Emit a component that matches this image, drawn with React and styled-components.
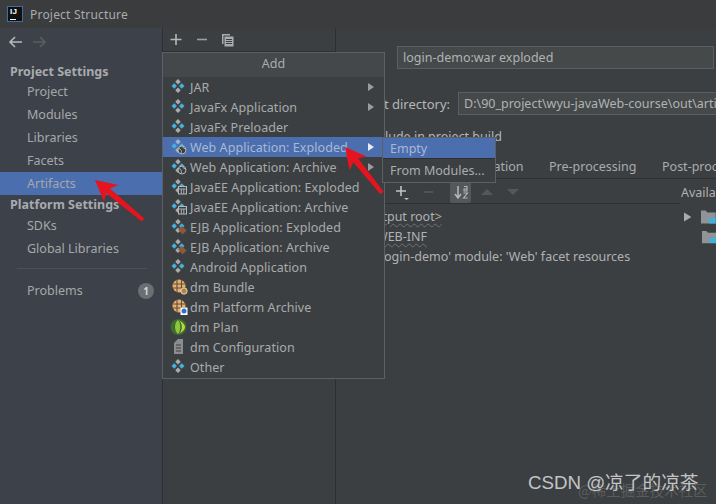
import React from "react";
import styled, { createGlobalStyle } from "styled-components";

const Global = createGlobalStyle`
  html, body { margin: 0; padding: 0; background: #3c3f41; }
  * { box-sizing: border-box; }
  #root { width: 716px; height: 504px; overflow: hidden; }
`;

const Win = styled.div`
  position: relative;
  width: 716px;
  height: 504px;
  overflow: hidden;
  display: flex;
  flex-direction: column;
  background: #3c3f41;
  color: #b4b7b9;
  font-family: "Noto Sans", "Open Sans", sans-serif;
  font-size: 13px;
`;
const TitleBar = styled.div`
  height: 28px;
  flex: none;
  display: flex;
  align-items: center;
  gap: 7px;
  padding-left: 7px;
  background: #3a3c3e;
  font-size: 12px;
  color: #a9abad;
  letter-spacing: 0.2px;
`;
const Logo = styled.div`
  width: 16px;
  height: 16px;
  background: #111;
  border: 1px solid #3f6ea5;
  color: #fff;
  font: bold 8px/8px "Liberation Sans", sans-serif;
  padding: 1px 0 0 2px;
  position: relative;
  &::after {
    content: "";
    position: absolute;
    left: 2px;
    bottom: 1px;
    width: 6px;
    height: 1px;
    background: #fff;
  }
`;
const Body = styled.div`
  flex: 1;
  display: flex;
  min-height: 0;
`;
const Sidebar = styled.div`
  width: 163px;
  flex: none;
  background: #3d4149;
  border-right: 1px solid #2e2f31;
  display: flex;
  flex-direction: column;
`;
const NavBar = styled.div`
  height: 28px;
  display: flex;
  align-items: center;
  gap: 11px;
  padding: 0 0 0 8px;
`;
const SideHead = styled.div`
  height: ${(p) => p.$h}px;
  display: flex;
  align-items: center;
  padding-left: 10px;
  font-weight: 700;
  font-size: 12.5px;
  color: #a8abae;
`;
const SideItem = styled.div`
  height: 23px;
  display: flex;
  align-items: center;
  padding-left: 27px;
  font-size: 12.5px;
  color: #a5a8ab;
  background: ${(p) => (p.$active ? "#4b6eaf" : "transparent")};
  justify-content: space-between;
  padding-right: 8px;
`;
const SideRule = styled.div`
  height: 1px;
  margin: 8px 15px 10px 17px;
  background: #4c4f55;
`;
const Badge = styled.span`
  width: 16px;
  height: 16px;
  border-radius: 50%;
  background: #6b6e73;
  color: #d5d6d7;
  font-size: 10px;
  font-weight: 700;
  display: flex;
  align-items: center;
  justify-content: center;
`;
const Middle = styled.div`
  width: 173px;
  flex: none;
  border-right: 1px solid #2e2f31;
`;
const MidBar = styled.div`
  height: 24px;
  display: flex;
  align-items: center;
  gap: 13px;
  padding-left: 6px;
  border-bottom: 1px solid #2e2f31;
`;
const Right = styled.div`
  flex: 1;
  min-width: 0;
  overflow: hidden;
  padding-top: 18px;
`;
const FieldRow = styled.div`
  display: flex;
  align-items: center;
  height: 23px;
  margin-bottom: ${(p) => p.$mb || 0}px;
  padding-left: ${(p) => p.$pl || 0}px;
  white-space: nowrap;
`;
const Label = styled.span`
  width: ${(p) => p.$w}px;
  flex: none;
  font-size: 13px;
  color: #b4b7b9;
`;
const Field = styled.div`
  height: 23px;
  flex: none;
  width: ${(p) => p.$w}px;
  border: 1px solid #5b5e60;
  background: #45494a;
  padding-left: 5px;
  line-height: 21px;
  font-size: 12.5px;
  color: #b0b3b5;
  overflow: hidden;
  white-space: nowrap;
`;
const Include = styled.div`
  height: 19px;
  margin-top: 12px;
  padding-left: 31px;
  font-size: 12.5px;
  line-height: 19px;
  white-space: nowrap;
`;
const Tabs = styled.div`
  display: flex;
  height: 33px;
  align-items: flex-end;
  padding: 0 0 3px 129px;
  border-bottom: 1px solid #2f3032;
  font-size: 12.5px;
  color: #a9acae;
  white-space: nowrap;
`;
const Tab = styled.span`
  width: ${(p) => p.$w}px;
  flex: none;
`;
const Tools = styled.div`
  height: 24px;
  display: flex;
  align-items: center;
  padding: 2px 0 0 59px;
`;
const SortBtn = styled.span`
  width: 21px;
  height: 21px;
  background: #55585a;
  border-radius: 2px;
  display: flex;
  align-items: center;
  justify-content: center;
  margin-left: 13px;
  flex: none;
`;
const Availa = styled.span`
  margin-left: auto;
  width: 35px;
  flex: none;
  overflow: hidden;
  font-size: 12.5px;
  white-space: nowrap;
  color: #aeb1b3;
`;
const Tree = styled.div`
  display: flex;
  border-top: 1px solid #2f3032;
  margin-right: 36px;
  padding-top: 3px;
`;
const TreeList = styled.div`
  flex: 1;
  min-width: 0;
  padding-left: ${(p) => p.$pl}px;
`;
const TreeRow = styled.div`
  height: 20px;
  line-height: 20px;
  font-size: 12.5px;
  color: #afb2b4;
  white-space: nowrap;
  margin-left: ${(p) => p.$ml || 0}px;
  text-decoration: ${(p) => (p.$wavy ? "underline wavy #707070 1px" : "none")};
  text-underline-offset: 2px;
`;
const Avail = styled.div`
  position: absolute;
  left: 684px;
  top: 209px;
  width: 32px;
  display: flex;
  flex-direction: column;
  gap: 4px;
`;
const AvailRow = styled.div`
  display: flex;
  align-items: center;
  height: 16px;
  padding-left: ${(p) => p.$pl || 0}px;
  gap: 10px;
`;
const Menu = styled.div`
  position: absolute;
  left: 162px;
  top: 52px;
  width: 223px;
  height: 327px;
  background: #3c3f41;
  border: 1px solid #5e6163;
  display: flex;
  flex-direction: column;
  z-index: 2;
`;
const MenuTitle = styled.div`
  height: 24px;
  flex: none;
  background: #45484a;
  text-align: center;
  line-height: 21px;
  font-size: 12.5px;
  color: #a9acae;
`;
const MenuItem = styled.div`
  height: 20px;
  flex: none;
  display: flex;
  align-items: center;
  padding: 0 10px 0 7px;
  gap: 2px;
  font-size: 12.5px;
  letter-spacing: 0.06px;
  color: ${(p) => (p.$active ? "#a9b9d3" : "#a8abad")};
  background: ${(p) => (p.$active ? "#4b6eaf" : "transparent")};
  white-space: nowrap;
`;
const ItemText = styled.span`
  flex: 1;
`;
const Caret = styled.span`
  width: 0;
  height: 0;
  border-left: 6px solid ${(p) => (p.$active ? "#e8ecf2" : "#9a9da0")};
  border-top: 4px solid transparent;
  border-bottom: 4px solid transparent;
`;
const Gap = styled.div`
  height: ${(p) => p.$h}px;
  flex: none;
`;
const Sub = styled.div`
  position: absolute;
  left: 382px;
  top: 137px;
  width: 114px;
  height: 46px;
  background: #3c3f41;
  border: 1px solid #5e6163;
  z-index: 3;
  display: flex;
  flex-direction: column;
`;
const SubItem = styled.div`
  height: ${(p) => p.$h}px;
  padding-left: 7px;
  display: flex;
  align-items: center;
  font-size: 12.5px;
  color: ${(p) => (p.$active ? "#a9b9d3" : "#aaadaf")};
  background: ${(p) => (p.$active ? "#4b6eaf" : "transparent")};
  border-bottom: ${(p) => (p.$active ? "1px solid #2f3032" : "none")};
`;
const ArrowSvg = styled.svg`
  position: absolute;
  left: ${(p) => p.$x}px;
  top: ${(p) => p.$y}px;
  z-index: 5;
`;
const Watermark = styled.div`
  position: absolute;
  left: 528px;
  top: 472px;
  font-family: "Liberation Sans", "Noto Sans CJK SC", sans-serif;
  font-size: 18.7px;
  line-height: 22px;
  color: #c2c4c6;
  white-space: nowrap;
  z-index: 6;
`;
const WatermarkBack = styled.div`
  position: absolute;
  left: 578px;
  top: 481px;
  font-family: "Noto Sans CJK SC", sans-serif;
  font-size: 14.5px;
  line-height: 18px;
  color: #5a5c5e;
  white-space: nowrap;
  z-index: 5;
`;

const Diamonds = ({ active }) => (
  <g transform="translate(1.6 1.6) scale(0.8)">
    <rect x="5.6" y="0.4" width="4.8" height="4.8" transform="rotate(45 8 2.8)" fill={active ? "#9fb3cf" : "#a9adb0"} />
    <rect x="0.9" y="5.6" width="4.8" height="4.8" transform="rotate(45 3.3 8)" fill="#45b0dc" />
    <rect x="10.3" y="5.6" width="4.8" height="4.8" transform="rotate(45 12.7 8)" fill="#45b0dc" />
    <rect x="5.6" y="10.8" width="4.8" height="4.8" transform="rotate(45 8 13.2)" fill={active ? "#9fb3cf" : "#a9adb0"} />
  </g>
);
const Icon = ({ kind, active }) => {
  if (kind === "bundle" || kind === "platform")
    return (
      <svg width="18" height="18" viewBox="-1 0 18 18">
        <circle cx="8" cy="8" r="6.500" fill="#e8b06a" />
        <path d="M1.500 6h13M1.500 10h13M6 1.500v13M10.500 1.500v13" stroke="#5f5040" strokeWidth="1.100" />
        {kind === "bundle" ? (
          <circle cx="13" cy="13" r="3.200" fill="#b8813d" stroke="#eee" strokeWidth="0.800" />
        ) : (
          <g>
            <rect x="9.500" y="9.500" width="7" height="7.500" fill="#fff" />
            <circle cx="13" cy="13" r="2.500" fill="#2f6fd0" />
          </g>
        )}
      </svg>
    );
  if (kind === "plan")
    return (
      <svg width="18" height="18" viewBox="0 0 18 18">
        <circle cx="8.500" cy="9" r="8" fill="#3e6b2e" />
        <path d="M8.500 2C13 5 13 13 8.500 16C12 14 15 12 15 9C15 6 12 4 8.500 2Z" fill="#b7d640" />
        <path d="M8 2C4 5 4 13 8 16C11 13 11 5 8 2Z" fill="#8cc63e" />
      </svg>
    );
  if (kind === "config")
    return (
      <svg width="18" height="18" viewBox="0 0 18 18">
        <path d="M4 5L8 1H13V16H4Z" fill="#8a8d8f" />
        <path d="M6 7H11M6 10H11M6 13H11" stroke="#3c3f41" strokeWidth="1" />
      </svg>
    );
  return (
    <svg width="18" height="18" viewBox="0 0 18 18">
      <Diamonds active={active} />
      {kind === "web" && (
        <g>
          <circle cx="12" cy="12" r="4" fill="#3c3f41" stroke="#b5b8ba" strokeWidth="1" />
          <path d="M9 10.500C11 11 12 13 11 15.500M12 8.500C13 10 15 11 16 11" stroke="#b5b8ba" strokeWidth="0.900" fill="none" />
        </g>
      )}
      {kind === "ee" && (
        <g>
          <rect x="8.500" y="8.500" width="8" height="7.500" fill="#3c3f41" stroke="#b5b8ba" strokeWidth="1" />
          <path d="M8.500 11H16.500M11.300 11V16M13.800 11V16" stroke="#b5b8ba" strokeWidth="0.900" />
        </g>
      )}
      {kind === "ejb" && <path d="M8 11L12 8L16.500 12.500L12.500 16.500Z" fill="#8a5a3c" />}
    </svg>
  );
};

const items = [
  ["JAR", "d", 1],
  ["JavaFx Application", "d", 1],
  ["JavaFx Preloader", "d", 0],
  ["Web Application: Exploded", "web", 1, true],
  ["Web Application: Archive", "web", 1],
  ["JavaEE Application: Exploded", "ee", 0],
  ["JavaEE Application: Archive", "ee", 0],
  ["EJB Application: Exploded", "ejb", 0],
  ["EJB Application: Archive", "ejb", 0],
  ["Android Application", "d", 0],
  ["dm Bundle", "bundle", 0],
  ["dm Platform Archive", "platform", 0],
  ["dm Plan", "plan", 0],
  ["dm Configuration", "config", 0],
  ["Other", "d", 0],
];

const Arrow = ({ x, y, w, h, tip, tail }) => {
  const dx = tail[0] - tip[0];
  const dy = tail[1] - tip[1];
  const len = Math.hypot(dx, dy);
  const ux = dx / len;
  const uy = dy / len;
  const nx = -uy;
  const ny = ux;
  const p = (d, o) => `${tip[0] + ux * d + nx * o},${tip[1] + uy * d + ny * o}`;
  return (
    <ArrowSvg $x={x} $y={y} width={w} height={h} viewBox={`${x} ${y} ${w} ${h}`}>
      <polygon
        points={[p(0, 0), p(21, 11), p(17, 3), p(len, 2), p(len, -2), p(17, -3), p(21, -11)].join(" ")}
        fill="#e5141f"
      />
    </ArrowSvg>
  );
};

const Stroke = ({ w = 12, h = 12, c = "#b5b8ba", children }) => (
  <svg width={w} height={h} viewBox={`0 0 ${w} ${h}`} fill="none" stroke={c} strokeWidth="1.600">
    {children}
  </svg>
);

const Folder = () => (
  <svg width="16" height="14" viewBox="0 0 16 14">
    <path d="M0 0H5L7 2H16V14H0Z" fill="#8e9498" />
    <rect x="9" y="8" width="7" height="6" fill="#3fb1e0" />
  </svg>
);

export default function App() {
  return (
    <Win>
      <Global />
      <TitleBar>
        <Logo>IJ</Logo>
        <span>Project Structure</span>
      </TitleBar>
      <Body>
        <Sidebar>
          <NavBar>
            <Stroke w={14} h={12}>
              <path d="M14 6H2M7 1L2 6L7 11" />
            </Stroke>
            <Stroke w={14} h={12} c="#5a5d60">
              <path d="M0 6H12M7 1L12 6L7 11" />
            </Stroke>
          </NavBar>
          <Gap $h={6} />
          <SideHead $h={18}>Project Settings</SideHead>
          <SideItem>Project</SideItem>
          <SideItem>Modules</SideItem>
          <SideItem>Libraries</SideItem>
          <SideItem>Facets</SideItem>
          <SideItem $active>Artifacts</SideItem>
          <SideHead $h={19}>Platform Settings</SideHead>
          <SideItem>SDKs</SideItem>
          <SideItem>Global Libraries</SideItem>
          <SideRule />
          <SideItem>
            Problems
            <Badge>1</Badge>
          </SideItem>
        </Sidebar>
        <Middle>
          <MidBar>
            <Stroke w={14} h={14}>
              <path d="M7 1V12M1.500 6.500H12.500" />
            </Stroke>
            <Stroke w={12} h={14} c="#9c9fa2">
              <path d="M1 6.500H11" />
            </Stroke>
            <svg width="13" height="14" viewBox="0 0 13 14">
              <path d="M1 1H9V2.500H2.500V11H1Z" fill="#a9acae" />
              <rect x="3.500" y="3.500" width="9" height="10" fill="#a9acae" />
              <path d="M5 6.500H11M5 8.500H11M5 10.500H11" stroke="#3c3f41" strokeWidth="1" />
            </svg>
          </MidBar>
        </Middle>
        <Right>
          <FieldRow $mb={23} $pl={61}>
            <Field $w={317}>login-demo:war exploded</Field>
          </FieldRow>
          <FieldRow $pl={9}>
            <Label $w={113}>Output directory:</Label>
            <Field $w={270}>D:\90_project\wyu-javaWeb-course\out\artifacts</Field>
          </FieldRow>
          <Include>Include in project build</Include>
          <Tabs>
            <Tab $w={84}>Validation</Tab>
            <Tab $w={113}>Pre-processing</Tab>
            <Tab $w={120}>Post-processing</Tab>
          </Tabs>
          <Tools>
            <svg width="23" height="18" viewBox="0 0 23 18">
              <path d="M6 3V13M1 8H11" stroke="#c0c3c5" strokeWidth="1.600" />
              <path d="M9 15H14L11.500 17Z" fill="#c0c3c5" />
            </svg>
            <svg width="19" height="14" viewBox="0 0 19 14">
              <path d="M6 7H15" stroke="#55585a" strokeWidth="1.600" />
            </svg>
            <SortBtn>
              <svg width="16" height="16" viewBox="0 0 16 16">
                <path d="M5 2V13M2 10L5 14L8 10" stroke="#b5b8ba" strokeWidth="1.500" fill="none" />
                <path d="M11 2.500H14V7H11V5H14M10.500 9H14.500L10.500 14H14.500" stroke="#b5b8ba" strokeWidth="1.100" fill="none" />
              </svg>
            </SortBtn>
            <svg width="31" height="12" viewBox="0 0 31 12">
              <path d="M10 9L16 3L22 9Z" fill="#55585a" />
            </svg>
            <svg width="26" height="12" viewBox="0 0 26 12">
              <path d="M5 3L11 9L17 3Z" fill="#55585a" />
            </svg>
            <Availa>Available</Availa>
          </Tools>
          <Tree>
            <TreeList $pl={24}>
              <TreeRow $wavy>&lt;output root&gt;</TreeRow>
              <TreeRow $wavy $ml={16}>WEB-INF</TreeRow>
              <TreeRow $ml={18}>'login-demo' module: 'Web' facet resources</TreeRow>
            </TreeList>
          </Tree>
        </Right>
      </Body>

      <Avail>
        <AvailRow>
          <svg width="8" height="10" viewBox="0 0 8 10">
            <path d="M0 0L8 5L0 10Z" fill="#a9acae" />
          </svg>
          <Folder />
        </AvailRow>
        <AvailRow $pl={18}>
          <Folder />
        </AvailRow>
      </Avail>

      <Menu>
        <MenuTitle>Add</MenuTitle>
        {items.map(([label, kind, sub, active]) => (
          <MenuItem key={label} $active={active}>
            <Icon kind={kind} active={active} />
            <ItemText>{label}</ItemText>
            {sub ? <Caret $active={active} /> : null}
          </MenuItem>
        ))}
      </Menu>
      <Sub>
        <SubItem $active $h={21}>Empty</SubItem>
        <SubItem $h={23}>From Modules...</SubItem>
      </Sub>

      <Arrow x={85} y={170} w={70} h={60} tip={[95, 180]} tail={[143, 220]} />
      <Arrow x={335} y={137} w={60} h={65} tip={[345, 147]} tail={[382, 193]} />

      <WatermarkBack>@稀土掘金技术社区</WatermarkBack>
      <Watermark>CSDN @凉了的凉茶</Watermark>
    </Win>
  );
}
